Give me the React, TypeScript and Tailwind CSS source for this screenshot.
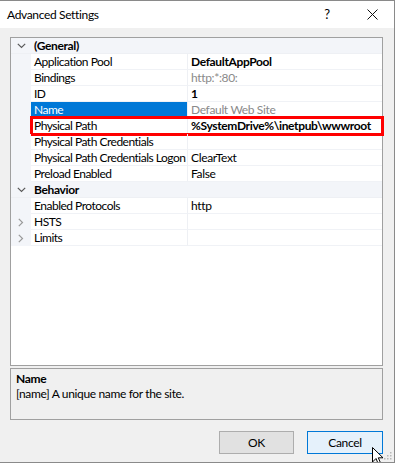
import React from "react";

const font = { fontFamily: 'Lato, "Noto Sans", sans-serif' };

type Row =
  | { kind: "cat"; label: string }
  | { kind: "prop"; label: string; value?: string; bold?: boolean; dim?: boolean; selected?: boolean; boxed?: boolean; expander?: boolean };

const rows: Row[] = [
  { kind: "cat", label: "(General)" },
  { kind: "prop", label: "Application Pool", value: "DefaultAppPool", bold: true },
  { kind: "prop", label: "Bindings", value: "http:*:80:", dim: true },
  { kind: "prop", label: "ID", value: "1", bold: true },
  { kind: "prop", label: "Name", value: "Default Web Site", selected: true, dim: true },
  { kind: "prop", label: "Physical Path", value: "%SystemDrive%\\inetpub\\wwwroot", bold: true, boxed: true },
  { kind: "prop", label: "Physical Path Credentials", value: "" },
  { kind: "prop", label: "Physical Path Credentials Logon", value: "ClearText" },
  { kind: "prop", label: "Preload Enabled", value: "False" },
  { kind: "cat", label: "Behavior" },
  { kind: "prop", label: "Enabled Protocols", value: "http" },
  { kind: "prop", label: "HSTS", value: "", expander: true },
  { kind: "prop", label: "Limits", value: "", expander: true },
];

function ChevronDown() {
  return (
    <svg width="9" height="6" viewBox="0 0 9 6">
      <path d="M0.8 0.8 L4.5 4.5 L8.2 0.8" fill="none" stroke="#5a5a5a" strokeWidth="1.2" />
    </svg>
  );
}
function ChevronRight() {
  return (
    <svg width="6" height="9" viewBox="0 0 6 9">
      <path d="M0.8 0.8 L4.5 4.5 L0.8 8.2" fill="none" stroke="#9a9a9a" strokeWidth="1.2" />
    </svg>
  );
}

export default function App() {
  return (
    <div
      className="relative w-[395px] h-[463px] bg-[#f0f0f0] flex flex-col border-t border-r border-b border-[#8a8a8a] text-[12px] tracking-[-0.35px] text-black overflow-hidden"
      style={font}
    >
      {/* Title bar */}
      <div className="h-[27px] bg-white flex items-center pl-[7px] shrink-0">
        <span className="flex-1 leading-none">Advanced Settings</span>
        <span className="w-[46px] text-center text-[13px] leading-none">?</span>
        <span className="w-[44px] flex justify-center">
          <svg width="11" height="11" viewBox="0 0 11 11">
            <path d="M0.5 0.5 L10.5 10.5 M10.5 0.5 L0.5 10.5" stroke="#111" strokeWidth="1" />
          </svg>
        </span>
      </div>

      <div className="flex-1 flex flex-col pl-[10px] pr-[11px] pt-[9px]">
        {/* Property grid */}
        <div className="h-[329px] border border-[#a0a0a0] bg-white flex flex-col">
          {rows.map((r, i) =>
            r.kind === "cat" ? (
              <div key={i} className="h-[16px] flex items-center bg-[#f3f5f9] border-b border-[#eef0f4]">
                <div className="w-[20px] flex justify-center pt-[1px]">
                  <ChevronDown />
                </div>
                <span className="pl-[3px] font-bold leading-none">{r.label}</span>
              </div>
            ) : (
              <div key={i} className="relative h-[16px] flex">
                <div className="w-[20px] bg-[#f3f5f9] flex items-center justify-center">
                  {r.expander ? <ChevronRight /> : null}
                </div>
                <div
                  className={
                    "w-[157px] flex items-center pl-[3px] border-r border-[#eef0f4] whitespace-nowrap overflow-hidden tracking-[-0.5px] " +
                    (r.selected ? "bg-[#0078d7] text-white" : "border-b border-b-[#f0f2f6]")
                  }
                >
                  <span className="leading-none">{r.label}</span>
                </div>
                <div className="flex-1 flex items-center pl-[3px] border-b border-[#f0f2f6] whitespace-nowrap overflow-hidden">
                  <span
                    className={
                      "leading-none " + (r.bold ? "font-bold " : "") + (r.dim ? "text-[#8a8a8a]" : "")
                    }
                  >
                    {r.value}
                  </span>
                </div>
                {r.boxed ? (
                  <div className="absolute left-[19px] right-[-2px] top-[-2px] bottom-[-2px] border-[3px] border-[#ff0000] pointer-events-none" />
                ) : null}
              </div>
            )
          )}
        </div>

        {/* Description */}
        <div className="mt-[2px] h-[52px] border border-[#a0a0a0] bg-[#f0f0f0] px-[5px] pt-[2px]">
          <div className="font-bold leading-[15px]">Name</div>
          <div className="leading-[15px]">[name] A unique name for the site.</div>
        </div>

        {/* Buttons */}
        <div className="flex justify-end gap-[13px] mt-[11px]">
          <button className="w-[75px] h-[23px] bg-[#e1e1e1] border border-[#adadad] text-[12px] leading-none">
            OK
          </button>
          <button className="w-[76px] h-[23px] bg-[#e5f1fb] border border-[#0078d7] text-[12px] leading-none">
            Cancel
          </button>
        </div>
      </div>

      {/* Resize grip */}
      <svg className="absolute right-[2px] bottom-[2px]" width="10" height="10" viewBox="0 0 10 10">
        {[[8, 2], [8, 5], [8, 8], [5, 5], [5, 8], [2, 8]].map(([x, y], k) => (
          <rect key={k} x={x} y={y} width="1.5" height="1.5" fill="#b8b8b8" />
        ))}
      </svg>

      {/* Mouse cursor */}
      <svg className="absolute left-[372px] top-[446px]" width="14" height="20" viewBox="0 0 14 20">
        <path d="M0.5 0.5 L0.5 15 L4 11.5 L6.5 17.5 L8.8 16.5 L6.3 10.8 L11 10.8 Z" fill="#fff" stroke="#000" strokeWidth="1" />
      </svg>
    </div>
  );
}
